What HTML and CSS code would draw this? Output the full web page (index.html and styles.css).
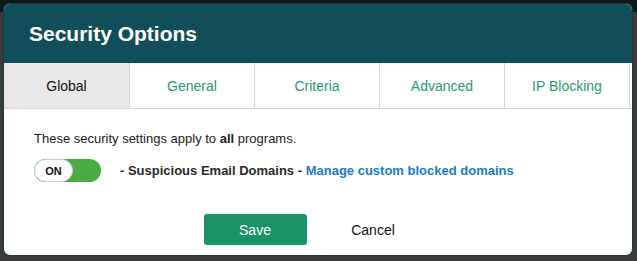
FILE: index.html
```html
<!DOCTYPE html>
<html lang="en">
<head>
  <meta charset="UTF-8">
  <title>Security Options</title>
  <link rel="stylesheet" href="styles.css">
</head>
<body>
  <div class="modal">
    <header class="modal-header">
      <h1>Security Options</h1>
    </header>
    <nav class="tabs">
      <div class="tab active">Global</div>
      <div class="tab">General</div>
      <div class="tab">Criteria</div>
      <div class="tab">Advanced</div>
      <div class="tab">IP Blocking</div>
    </nav>
    <div class="modal-body">
      <p class="intro">These security settings apply to <b>all</b> programs.</p>
      <div class="setting">
        <div class="toggle">
          <div class="toggle-knob">ON</div>
        </div>
        <span class="setting-label">- Suspicious Email Domains - <a href="#">Manage custom blocked domains</a></span>
      </div>
      <div class="actions">
        <button class="btn-save">Save</button>
        <button class="btn-cancel">Cancel</button>
      </div>
    </div>
  </div>
</body>
</html>
```

FILE: styles.css
```css
body {
  margin: 0;
  padding: 4px;
  height: 261px;
  box-sizing: border-box;
  overflow: hidden;
  font-family: 'Liberation Sans', Arial, sans-serif;
  background: linear-gradient(#0f181a 0, #0f181a 12px, #3a3c3c 12px);
}
.modal {
  width: 628px;
  height: 251px;
  background-color: #ffffff;
  border-radius: 6px;
  overflow: hidden;
  box-shadow: 0 0 0 1px #1d3a3e;
  display: flex;
  flex-direction: column;
}
.modal-header {
  background-color: #114e5a;
  height: 59px;
  padding-left: 25px;
  display: flex;
  align-items: center;
}
.modal-header h1 {
  margin: 0;
  color: #ffffff;
  font-size: 21px;
  font-weight: bold;
}
.tabs {
  display: flex;
  height: 46px;
  box-sizing: border-box;
  border-bottom: 1px solid #d6d6d6;
}
.tab {
  width: 125px;
  box-sizing: border-box;
  border-right: 1px solid #d6d6d6;
  display: flex;
  align-items: center;
  justify-content: center;
  font-size: 14px;
  color: #1f9c6c;
}
.tab:first-child {
  width: 126px;
}
.tab.active {
  background-color: #e8e8e8;
  color: #111111;
}
.modal-body {
  padding: 21px 30px 0 30px;
}
.intro {
  margin: 0;
  font-size: 13px;
  line-height: 18px;
  color: #222222;
}
.setting {
  display: flex;
  align-items: center;
  gap: 19px;
  margin-top: 11px;
}
.toggle {
  width: 67px;
  height: 23px;
  background-color: #4caa47;
  border-radius: 12px;
  display: flex;
}
.toggle-knob {
  width: 39px;
  height: 23px;
  box-sizing: border-box;
  border: 1px solid #bfd2df;
  border-radius: 12px;
  background-color: #ffffff;
  display: flex;
  align-items: center;
  justify-content: center;
  font-size: 11px;
  font-weight: bold;
  color: #111111;
}
.setting-label {
  font-size: 13px;
  font-weight: bold;
  color: #2a2a2a;
}
.setting-label a {
  color: #1a7bc6;
  text-decoration: none;
}
.actions {
  display: flex;
  justify-content: center;
  gap: 15px;
  margin-top: 32px;
  padding-right: 8px;
}
.actions button {
  width: 103px;
  height: 31px;
  border: none;
  border-radius: 3px;
  font-family: 'Liberation Sans', Arial, sans-serif;
  font-size: 14px;
  cursor: pointer;
}
.btn-save {
  background-color: #1a9466;
  color: #ffffff;
}
.btn-cancel {
  background: none;
  color: #111111;
}
```
